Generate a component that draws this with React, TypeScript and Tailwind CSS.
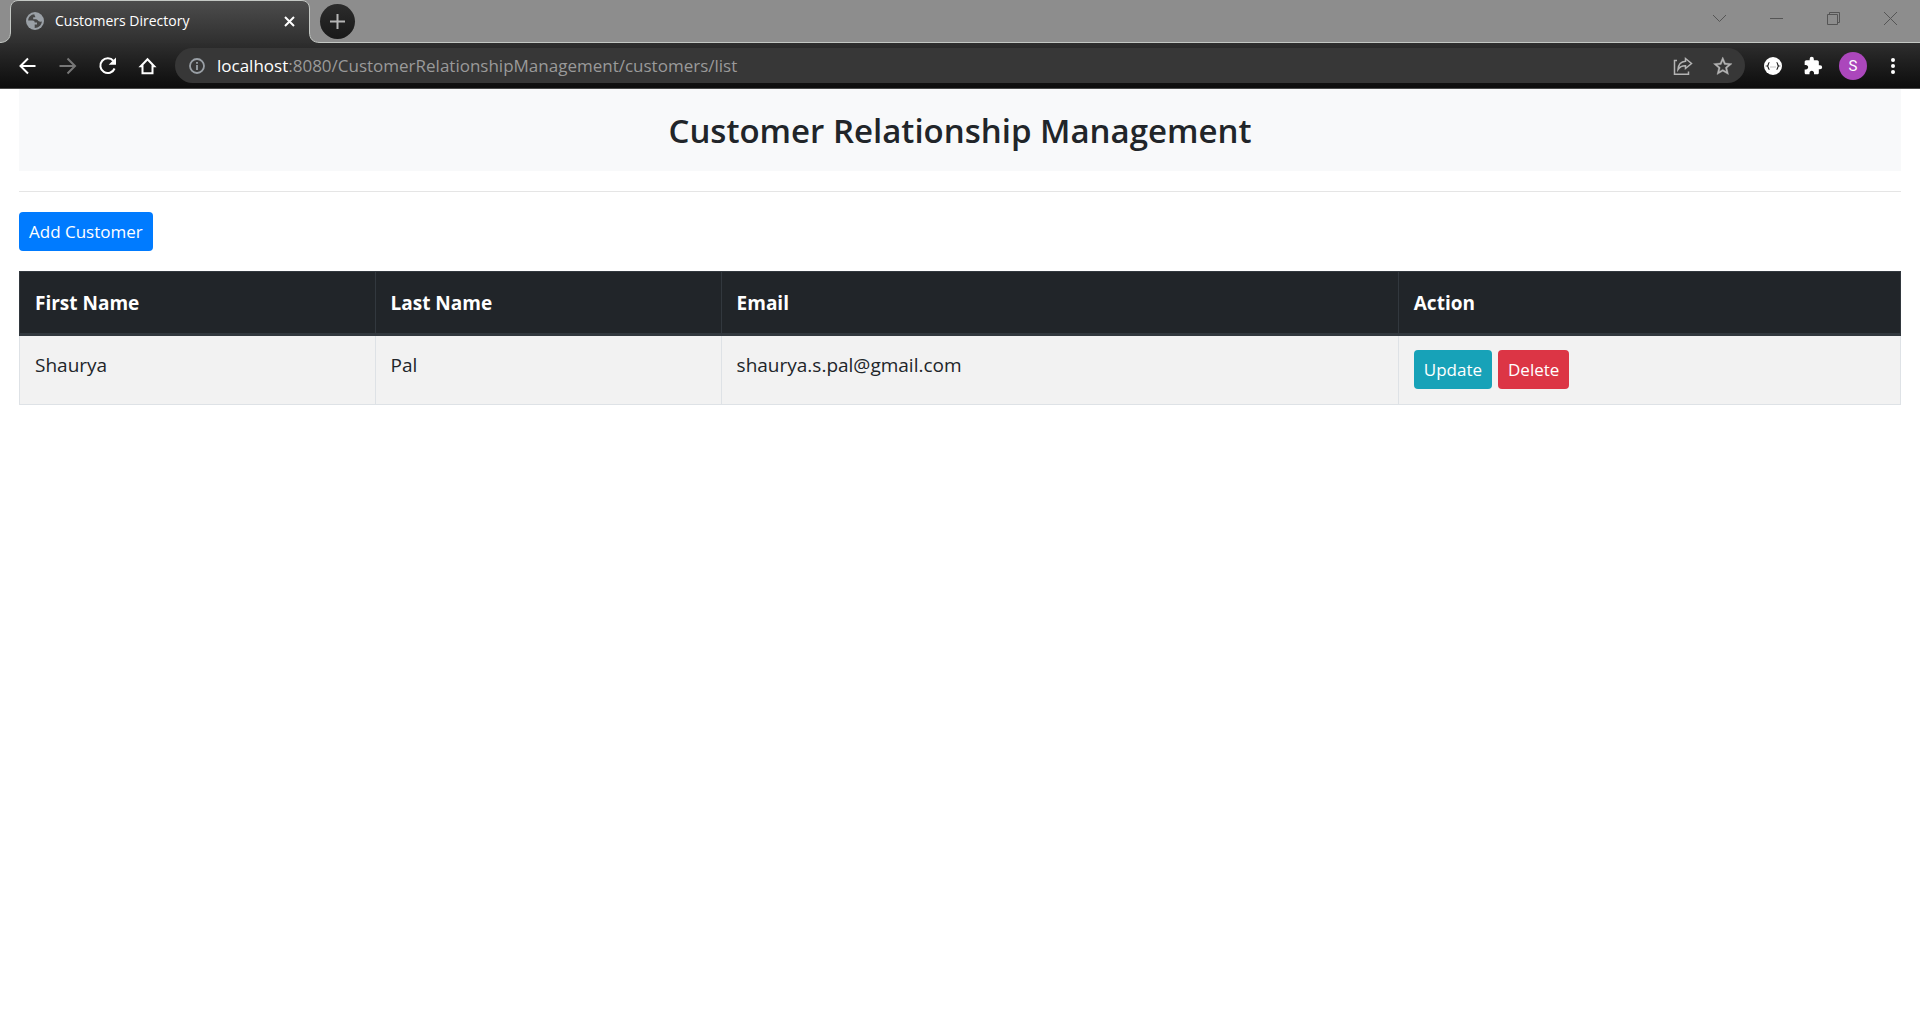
import type { ReactNode } from "react";

const customers = [
  { firstName: "Shaurya", lastName: "Pal", email: "shaurya.s.pal@gmail.com" },
];

function IconButton({ label, className, children }: { label: string; className: string; children: ReactNode }) {
  return (
    <button type="button" aria-label={label} className={`flex shrink-0 items-center justify-center ${className}`}>
      {children}
    </button>
  );
}

function TabOutline() {
  return (
    <svg aria-hidden="true" className="absolute top-0 left-0 h-[43px] w-[320px]" viewBox="0 0 320 43" fill="none">
      <defs>
        <linearGradient id="tabFill" x1="0" y1="0" x2="0" y2="43" gradientUnits="userSpaceOnUse">
          <stop stopColor="#4d4d4d" />
          <stop offset="1" stopColor="#2f2f2f" />
        </linearGradient>
      </defs>
      <path
        d="M0 43V42.500C6 42.500 10.500 39 10.500 32V9C10.500 3.500 13.500 .5 19 .5H301C306.500 .5 309.500 3.500 309.500 9V32C309.500 39 313 42.500 320 42.500V43Z"
        fill="url(#tabFill)"
      />
      <path
        d="M0 42.500C6 42.500 10.500 39 10.500 32V9C10.500 3.500 13.500 .5 19 .5H301C306.500 .5 309.500 3.500 309.500 9V32C309.500 39 313 42.500 320 42.500"
        stroke="#c4c8c4"
      />
    </svg>
  );
}

function TabStrip() {
  return (
    <div className="flex h-[43px] bg-[#8d8d8d]">
      <div className="relative flex w-[320px] shrink-0 items-center pr-6 pb-px pl-[26px]">
        <TabOutline />
        <svg aria-hidden="true" className="relative size-[18px]" viewBox="0 0 18 18">
          <circle cx="9" cy="9" r="9" fill="#9aa0a6" />
          <path d="M8.300 2.200C5 2.400 2.300 5 2.200 8.500H6.500C8 8.500 8.700 9.200 8.700 10.500H11V12.500H8.700V15.900C12.500 16 15.800 13 15.900 9.200C15 9.900 13.800 9.900 12.800 9.300C11.800 8.700 11.600 7.300 9.600 7.300H7.200V5.200H9.300C9.300 3.800 8.300 3.500 8.300 2.200Z" fill="#464646" />
        </svg>
        <span className="relative ml-[11px] grow text-sm text-white">Customers Directory</span>
        <IconButton label="Close tab" className="relative size-[13px] text-white">
          <svg className="size-[13px]" viewBox="0 0 13 13" stroke="currentColor" strokeWidth="2">
            <path d="M2 2l9 9M11 2l-9 9" />
          </svg>
        </IconButton>
      </div>
      <div className="flex grow items-center border-b border-[#c4c8c4]">
        <IconButton label="New tab" className="size-[35px] rounded-full bg-linear-to-b from-[#2c2c2c] to-[#191919] text-[#b5b5b5]">
          <svg className="size-[15px]" viewBox="0 0 15 15" stroke="currentColor" strokeWidth="2">
            <path d="M7.500 0v15M0 7.500h15" />
          </svg>
        </IconButton>
        <div className="ml-auto flex h-full items-start gap-11 pt-3 pr-[23px] text-[#555]">
          <IconButton label="Search tabs" className="size-[13px]">
            <svg className="size-[13px]" viewBox="0 0 13 13" fill="none" stroke="currentColor">
              <path d="M0 3l6.500 6.500L13 3" />
            </svg>
          </IconButton>
          <IconButton label="Minimize" className="size-[13px]">
            <svg className="size-[13px]" viewBox="0 0 13 13" stroke="currentColor">
              <path d="M0 6.500h13" />
            </svg>
          </IconButton>
          <IconButton label="Restore" className="size-[13px]">
            <svg className="size-[13px]" viewBox="0 0 13 13" fill="none" stroke="currentColor">
              <path d="M.5 2.500h10v10h-10zM2.500 2.500v-2h10v10h-2" />
            </svg>
          </IconButton>
          <IconButton label="Close window" className="size-[13px]">
            <svg className="size-[13px]" viewBox="0 0 13 13" stroke="currentColor">
              <path d="M0 0l13 13M13 0L0 13" />
            </svg>
          </IconButton>
        </div>
      </div>
    </div>
  );
}

function Toolbar() {
  return (
    <div className="flex h-[46px] items-center border-b border-[#4a4a4a] bg-linear-to-b from-[#2e2e2e] to-[#0d0d0d] pr-[17px] pl-[18px]">
      <div className="flex gap-5 pr-[17px] text-white">
        <IconButton label="Back" className="size-5">
          <svg className="size-5" viewBox="0 0 20 20" fill="none" stroke="currentColor" strokeWidth="2">
            <path d="M17.500 10H3M10 2.500L2.500 10l7.500 7.500" />
          </svg>
        </IconButton>
        <IconButton label="Forward" className="size-5 text-[#777]">
          <svg className="size-5" viewBox="0 0 20 20" fill="none" stroke="currentColor" strokeWidth="2">
            <path d="M1.500 10h15.500M9.500 2.500L17 10l-7.500 7.500" />
          </svg>
        </IconButton>
        <IconButton label="Reload" className="size-5">
          <svg className="size-5" viewBox="0 0 20 20" fill="none">
            <path d="M15.500 5A7.400 7.400 0 1 0 16.600 12.500" stroke="currentColor" strokeWidth="2" />
            <path d="M18 1.500v7.300h-7.300z" fill="currentColor" />
          </svg>
        </IconButton>
        <IconButton label="Home" className="size-5">
          <svg className="size-5" viewBox="0 0 20 20" fill="none" stroke="currentColor" strokeWidth="2">
            <path d="M2.800 10.200H4.500V17.200H14.500V10.200H16.200L9.500 3.300Z" />
          </svg>
        </IconButton>
      </div>
      <div className="flex h-[35px] grow items-center rounded-full bg-[#373737] pr-3 pl-[14px]">
        <svg aria-hidden="true" className="size-4 shrink-0" viewBox="0 0 16 16" fill="none" stroke="#9aa0a6">
          <circle cx="8" cy="8" r="7" strokeWidth="1.800" />
          <path d="M8 7v5M8 4v1.800" strokeWidth="1.800" />
        </svg>
        <label htmlFor="address" className="ml-3 text-[17px] leading-6 text-white">localhost</label>
        <input
          id="address"
          type="text"
          defaultValue=":8080/CustomerRelationshipManagement/customers/list"
          className="min-w-0 grow bg-transparent text-[17px] leading-6 text-[#9a9a9a] outline-none"
        />
        <div className="flex gap-5 text-[#b4b4b4]">
          <IconButton label="Share this page" className="size-5">
            <svg className="size-5" viewBox="0 0 20 20" fill="none" stroke="currentColor" strokeWidth="1.500">
              <path d="M4 4.500H1.500V18.300H15.500V15.500" />
              <path d="M12.500 2.500L18.500 7.500L12.500 12.500V9.800C9 9.700 6.800 10.800 5 13.500C5.300 9 8 5.500 12.500 5.200Z" />
            </svg>
          </IconButton>
          <IconButton label="Bookmark this page" className="size-5">
            <svg className="size-5" viewBox="1.500 1 21.500 21.500" fill="currentColor" stroke="currentColor" strokeWidth=".4">
              <path d="M22 9.240l-7.190-.62L12 2 9.190 8.630 2 9.240l5.460 4.730L5.820 21 12 17.270 18.180 21l-1.630-7.030L22 9.240zM12 15.400l-3.760 2.270 1-4.280-3.320-2.880 4.380-.38L12 6.100l1.710 4.040 4.380.38-3.320 2.880 1 4.280L12 15.400z" />
            </svg>
          </IconButton>
        </div>
      </div>
      <IconButton label="JSON formatter" className="ml-[18px] size-5">
        <svg className="size-5" viewBox="0 0 20 20" fill="none">
          <circle cx="10" cy="10" r="9" fill="#fff" />
          <path d="M6.500 6.500C4.800 6.500 6 9.500 4.200 10C6 10.500 4.800 13.500 6.500 13.500M13.500 6.500C15.200 6.500 14 9.500 15.800 10C14 10.500 15.200 13.500 13.500 13.500" stroke="#222" strokeWidth="1.200" />
          <path d="M7.500 11h1M9.500 11h1M11.500 11h1" stroke="#888" />
        </svg>
      </IconButton>
      <IconButton label="Extensions" className="ml-5 size-5 text-white">
        <svg className="size-5" viewBox="0 0 24 24" fill="currentColor">
          <path d="M20.500 11H19V7c0-1.100-.9-2-2-2h-4V3.500a2.500 2.500 0 0 0-5 0V5H4c-1.100 0-1.990.9-1.990 2v3.800H3.500c1.490 0 2.700 1.210 2.700 2.700s-1.210 2.700-2.700 2.700H2V20c0 1.100.9 2 2 2h3.800v-1.500c0-1.490 1.210-2.700 2.700-2.700s2.700 1.210 2.700 2.700V22H17c1.100 0 2-.9 2-2v-4h1.500a2.500 2.500 0 0 0 0-5z" />
        </svg>
      </IconButton>
      <IconButton label="Profile" className="ml-4 size-7 rounded-full bg-[#ab47bc] font-[Roboto,sans-serif] text-[15px] text-white">
        S
      </IconButton>
      <IconButton label="Menu" className="ml-4 size-5 text-white">
        <svg className="size-5" viewBox="0 0 20 20" fill="currentColor">
          <circle cx="10" cy="4" r="2" />
          <circle cx="10" cy="10" r="2" />
          <circle cx="10" cy="16" r="2" />
        </svg>
      </IconButton>
    </div>
  );
}

const headCell = "border border-b-[3px] border-[#32383e] px-[15px] pt-4 pb-[15px] text-left font-bold";
const bodyCell = "border border-[#dee2e6] px-[15px] pt-[14px] pb-[15px] align-top";
const button = "h-[39px] rounded px-[10px] text-[17px] text-white";

export default function App() {
  return (
    <div className="min-h-screen bg-white font-['Open_Sans','Noto_Sans',sans-serif] text-[19px] leading-[30px] text-[#212529]">
      <header>
        <TabStrip />
        <Toolbar />
      </header>
      <main className="px-[19px]">
        <h1 className="bg-[#f8f9fa] pt-[21px] pb-[19px] text-center text-[33px] leading-[42px] font-semibold">
          Customer Relationship Management
        </h1>
        <hr className="my-5 border-[#e5e5e5]" />
        <button type="button" className={`bg-[#007bff] ${button}`}>Add Customer</button>
        <table className="mt-5 w-full table-fixed border-collapse">
          <colgroup>
            <col className="w-[18.9%]" />
            <col className="w-[18.4%]" />
            <col className="w-[36%]" />
            <col />
          </colgroup>
          <thead className="bg-[#212529] text-white">
            <tr>
              <th className={headCell}>First Name</th>
              <th className={headCell}>Last Name</th>
              <th className={headCell}>Email</th>
              <th className={headCell}>Action</th>
            </tr>
          </thead>
          <tbody>
            {customers.map((customer) => (
              <tr key={customer.email} className="bg-[#f2f2f2]">
                <td className={bodyCell}>{customer.firstName}</td>
                <td className={bodyCell}>{customer.lastName}</td>
                <td className={bodyCell}>{customer.email}</td>
                <td className={bodyCell}>
                  <div className="flex gap-[6px]">
                    <button type="button" className={`bg-[#17a2b8] ${button}`}>Update</button>
                    <button type="button" className={`bg-[#dc3545] ${button}`}>Delete</button>
                  </div>
                </td>
              </tr>
            ))}
          </tbody>
        </table>
      </main>
    </div>
  );
}
